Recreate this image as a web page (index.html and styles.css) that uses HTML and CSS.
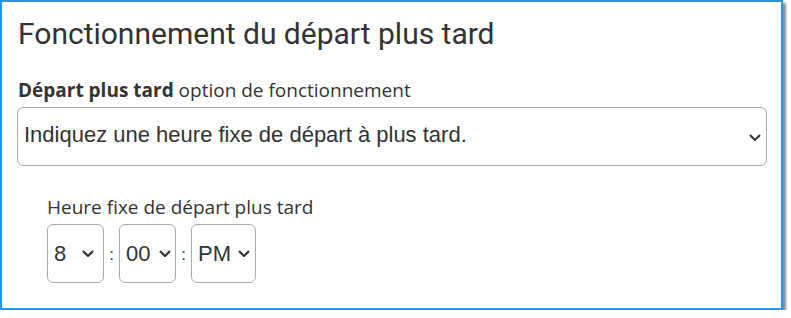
FILE: index.html
```html
<!DOCTYPE html>
<html>
<head>
<meta charset="utf-8">
<link rel="stylesheet" href="styles.css">
</head>
<body>
<div class="panel">
  <h1 class="title">Fonctionnement du départ plus tard</h1>
  <div class="field-label"><b>Départ plus tard</b> option de fonctionnement</div>
  <div class="select wide">
    <span class="select-text">Indiquez une heure fixe de départ à plus tard.</span>
    <svg class="chev" width="12" height="7" viewBox="0 0 12 7"><path d="M1 1l5 5 5-5" fill="none" stroke="#333" stroke-width="2"/></svg>
  </div>
  <div class="time-group">
    <div class="time-label">Heure fixe de départ plus tard</div>
    <div class="time-row">
      <div class="select small s-hour">
        <span class="select-text">8</span>
        <svg class="chev" width="12" height="7" viewBox="0 0 12 7"><path d="M1 1l5 5 5-5" fill="none" stroke="#333" stroke-width="2.2"/></svg>
      </div>
      <span class="colon">:</span>
      <div class="select small s-min">
        <span class="select-text">00</span>
        <svg class="chev" width="12" height="7" viewBox="0 0 12 7"><path d="M1 1l5 5 5-5" fill="none" stroke="#333" stroke-width="2.2"/></svg>
      </div>
      <span class="colon">:</span>
      <div class="select small s-ampm">
        <span class="select-text">PM</span>
        <svg class="chev" width="12" height="7" viewBox="0 0 12 7"><path d="M1 1l5 5 5-5" fill="none" stroke="#333" stroke-width="2.2"/></svg>
      </div>
    </div>
  </div>
</div>
</body>
</html>
```
FILE: styles.css
```css
html, body { margin: 0; padding: 0; background: #fff; }
.panel {
  box-sizing: border-box;
  width: 783px;
  height: 310px;
  border: 2px solid #2196f3;
  box-shadow: 3px 3px 2px rgba(0,0,0,0.45);
  padding: 0 15px 0 15px;
  background: #fff;
}
.title {
  margin: 14px 0 0 1px;
  font-family: Roboto, sans-serif;
  font-weight: 400;
  font-size: 30px;
  line-height: 36px;
  color: #333;
}
.field-label {
  margin-top: 25px;
  margin-left: 1px;
  font-family: "Open Sans", sans-serif;
  font-size: 19px;
  line-height: 26px;
  color: #333;
}
.field-label b { font-weight: 700; }
.select {
  box-sizing: border-box;
  display: flex;
  align-items: center;
  border: 1px solid #aaa;
  border-radius: 6px;
  background: #fff;
  font-family: "Liberation Sans", Arial, sans-serif;
  color: #333;
}
.wide {
  margin-top: 4px;
  height: 59px;
  width: 750px;
  padding: 0 5px 3px 6px;
  font-size: 22px;
}
.wide .select-text { flex: 1; }
.wide .chev { margin-top: 4px; }
.time-group { margin: 28px 0 0 30px; }
.time-label {
  font-family: "Open Sans", sans-serif;
  font-size: 19px;
  line-height: 26px;
  color: #333;
}
.time-row { display: flex; align-items: center; margin-top: 4px; }
.small {
  height: 59px;
  font-size: 22px;
  justify-content: space-between;
}
.s-hour { width: 57px; padding: 0 9px 0 6px; }
.s-min { width: 57px; padding: 0 4px 0 6px; }
.s-ampm { width: 65px; padding: 0 5px 0 6px; }
.colon {
  width: 15px;
  text-align: center;
  font-family: "Liberation Sans", Arial, sans-serif;
  font-size: 17px;
  color: #333;
  padding-top: 2px;
}
```
